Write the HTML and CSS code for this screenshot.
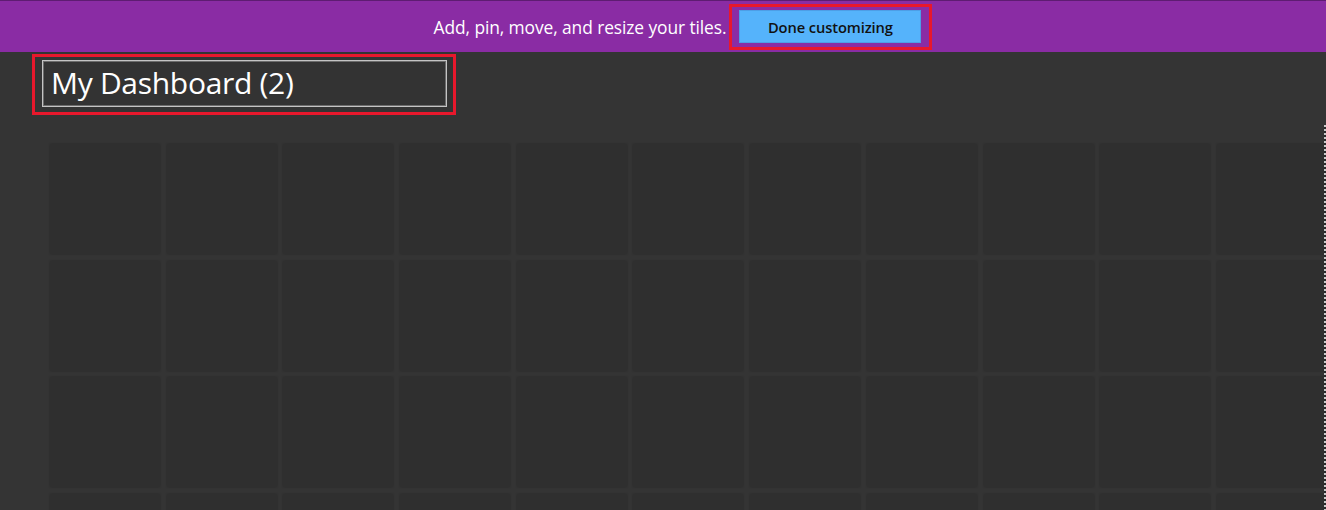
FILE: index.html
```html
<!DOCTYPE html>
<html lang="en">
<head>
<meta charset="utf-8">
<title>My Dashboard</title>
<link rel="stylesheet" href="styles.css">
</head>
<body>
<div class="page">
  <header class="banner">
    <span class="banner-text">Add, pin, move, and resize your tiles.</span>
    <span class="highlight highlight-btn"><button class="done">Done customizing</button></span>
  </header>
  <section class="title-row">
    <div class="highlight highlight-title">
      <div class="title-input">My Dashboard (2)</div>
    </div>
  </section>
  <div class="grid">
    <div class="tile"></div><div class="tile"></div><div class="tile"></div><div class="tile"></div><div class="tile"></div><div class="tile"></div><div class="tile"></div><div class="tile"></div><div class="tile"></div><div class="tile"></div><div class="tile"></div>
    <div class="tile"></div><div class="tile"></div><div class="tile"></div><div class="tile"></div><div class="tile"></div><div class="tile"></div><div class="tile"></div><div class="tile"></div><div class="tile"></div><div class="tile"></div><div class="tile"></div>
    <div class="tile"></div><div class="tile"></div><div class="tile"></div><div class="tile"></div><div class="tile"></div><div class="tile"></div><div class="tile"></div><div class="tile"></div><div class="tile"></div><div class="tile"></div><div class="tile"></div>
    <div class="tile"></div><div class="tile"></div><div class="tile"></div><div class="tile"></div><div class="tile"></div><div class="tile"></div><div class="tile"></div><div class="tile"></div><div class="tile"></div><div class="tile"></div><div class="tile"></div>
  </div>
  <div class="edge-dash"></div>
</div>
</body>
</html>
```
FILE: styles.css
```css
html, body {
  margin: 0;
  padding: 0;
  background: #343434;
  overflow: hidden;
}
body {
  width: 1326px;
  height: 510px;
  font-family: "Open Sans", "Noto Sans", "Liberation Sans", sans-serif;
}
.page {
  position: relative;
  width: 1326px;
  height: 510px;
  overflow: hidden;
  background: #343434;
}
.banner {
  box-sizing: border-box;
  height: 52px;
  border-top: 1px solid #5e1c72;
  background: #8a2ca4;
  display: flex;
  align-items: center;
  justify-content: center;
  padding-left: 40px;
  gap: 3px;
}
.banner-text {
  color: #ffffff;
  font-size: 17.4px;
  letter-spacing: -0.1px;
  padding-top: 1px;
}
.highlight {
  border: 3px solid #e8182c;
  display: block;
}
.highlight-btn {
  padding: 3px 8px 4px 7px;
  margin-top: 1px;
}
.done {
  display: block;
  width: 182px;
  height: 33px;
  border: 1px solid #4d9ee6;
  background: #55b3fb;
  color: #111111;
  font-family: "Open Sans", "Noto Sans", sans-serif;
  font-weight: 600;
  font-size: 14.7px;
  letter-spacing: -0.1px;
  padding: 0;
}
.title-row {
  padding: 2px 0 0 32px;
}
.highlight-title {
  padding: 3px 6px 5px 7px;
  box-sizing: content-box;
  width: 405px;
  height: 47px;
}
.title-input {
  box-sizing: border-box;
  width: 405px;
  height: 47px;
  border: 1px solid #c4c4c4;
  box-shadow: inset 0 0 0 1px #6c6c6c;
  background: #333333;
  color: #ffffff;
  font-size: 30px;
  letter-spacing: -0.3px;
  display: flex;
  align-items: center;
  padding: 0 0 2px 8px;
}
.grid {
  margin: 29px 0 0 50px;
  display: grid;
  grid-template-columns: repeat(11, 110px);
  grid-auto-rows: 110px;
  column-gap: 6.7px;
  row-gap: 6.7px;
}
.tile {
  background: #2f2f2f;
  box-shadow: 0 0 2px rgba(0, 0, 0, 0.25);
}
.edge-dash {
  position: absolute;
  right: 0;
  top: 125px;
  bottom: 0;
  width: 2px;
  background: repeating-linear-gradient(to bottom, #c8c8c8 0 2px, #2a2a2a 2px 4px);
}
```
